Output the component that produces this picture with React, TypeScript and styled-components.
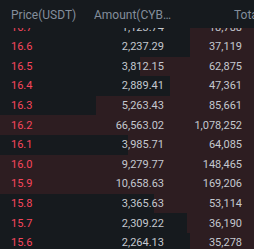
import React from "react";
import styled, { createGlobalStyle } from "styled-components";

const GlobalStyle = createGlobalStyle`
  html, body {
    margin: 0;
    padding: 0;
    background: #161a1e;
  }
  * { box-sizing: border-box; }
`;

const Panel = styled.div`
  width: 254px;
  height: 249px;
  overflow: hidden;
  background: #161a1e;
  display: flex;
  flex-direction: column;
  font-family: Roboto, "Liberation Sans", sans-serif;
`;

const Header = styled.div`
  flex: 0 0 28px;
  display: grid;
  grid-template-columns: 83px 140px 1fr;
  align-items: center;
  padding: 1px 0 0 11px;
  font-size: 12px;
  color: #848e9c;
  white-space: nowrap;
`;

const HeadCell = styled.div<{ $max?: number }>`
  overflow: ${(p) => (p.$max ? "hidden" : "visible")};
  text-overflow: ellipsis;
  max-width: ${(p) => (p.$max ? `${p.$max}px` : "none")};
`;

const ListViewport = styled.div`
  flex: 1;
  overflow: hidden;
`;

const List = styled.div`
  margin-top: -10.6px;
  display: flex;
  flex-direction: column;
`;

const Row = styled.div<{ $barStart: number }>`
  height: 19.6px;
  display: grid;
  grid-template-columns: 83px 70px 1fr;
  align-items: center;
  padding: 0 12px 0 11px;
  font-size: 11px;
  color: #c4c8cf;
  background: linear-gradient(
    to right,
    transparent ${(p) => p.$barStart}px,
    #2d1d21 ${(p) => p.$barStart}px
  );
`;

const Price = styled.span`
  color: #f6465d;
`;

const Num = styled.span`
  text-align: right;
`;

const rows = [
  { p: "16.7", a: "1,123.74", t: "18,788", bar: 190 },
  { p: "16.6", a: "2,237.29", t: "37,119", bar: 190 },
  { p: "16.5", a: "3,812.15", t: "62,875", bar: 140 },
  { p: "16.4", a: "2,889.41", t: "47,361", bar: 170 },
  { p: "16.3", a: "5,263.43", t: "85,661", bar: 96 },
  { p: "16.2", a: "66,563.02", t: "1,078,252", bar: 0 },
  { p: "16.1", a: "3,985.71", t: "64,085", bar: 128 },
  { p: "16.0", a: "9,279.77", t: "148,465", bar: 0 },
  { p: "15.9", a: "10,658.63", t: "169,206", bar: 0 },
  { p: "15.8", a: "3,365.63", t: "53,114", bar: 154 },
  { p: "15.7", a: "2,309.22", t: "36,190", bar: 187 },
  { p: "15.6", a: "2,264.13", t: "35,278", bar: 190 },
];

export default function App() {
  return (
    <>
      <GlobalStyle />
      <Panel>
        <Header>
          <HeadCell>Price(USDT)</HeadCell>
          <HeadCell $max={78}>Amount(CYBER)</HeadCell>
          <HeadCell>Total</HeadCell>
        </Header>
        <ListViewport>
          <List>
            {rows.map((r) => (
              <Row key={r.p} $barStart={r.bar}>
                <Price>{r.p}</Price>
                <Num>{r.a}</Num>
                <Num>{r.t}</Num>
              </Row>
            ))}
          </List>
        </ListViewport>
      </Panel>
    </>
  );
}
